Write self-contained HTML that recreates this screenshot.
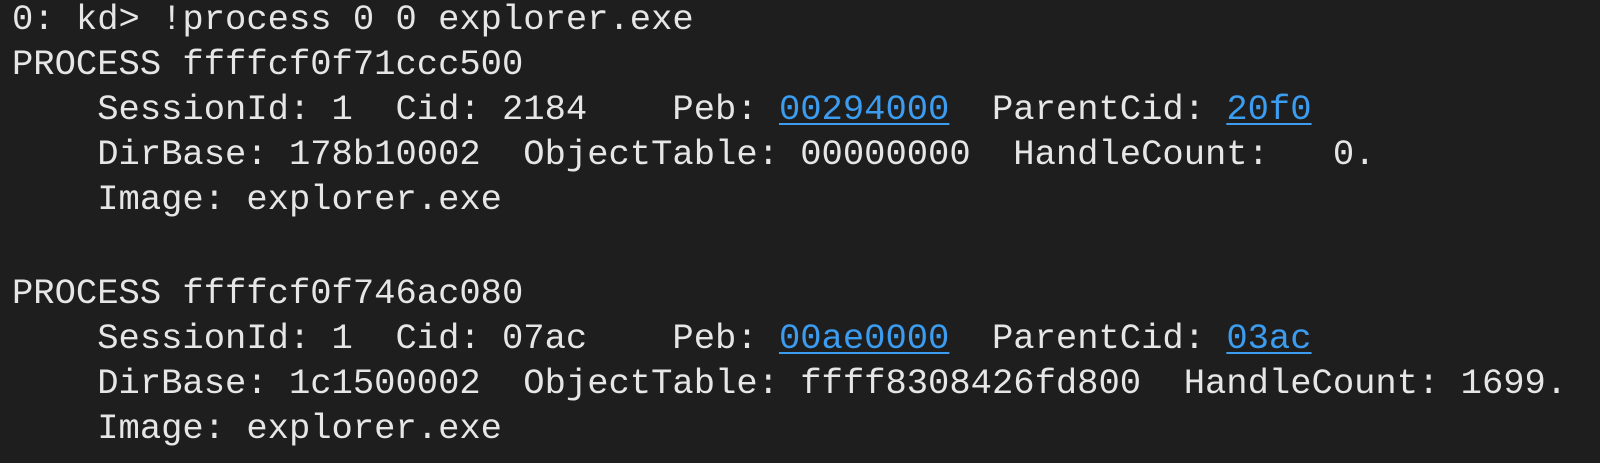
<!DOCTYPE html><html><head><style>
html,body{margin:0;background:#1e1e1e;width:1600px;height:463px;overflow:hidden}
div{position:absolute;left:12px;margin:0;white-space:pre;font-family:"Liberation Mono",monospace;font-size:35.5px;line-height:44px;color:#e6e6e6}
a{color:#3b9cf0;text-decoration:underline;text-underline-offset:4px;text-decoration-thickness:2px}
</style></head><body>
<div style="top:-2px">0: kd&gt; !process 0 0 explorer.exe</div>
<div style="top:43px">PROCESS ffffcf0f71ccc500</div>
<div style="top:88px">    SessionId: 1  Cid: 2184    Peb: <a>00294000</a>  ParentCid: <a>20f0</a></div>
<div style="top:133px">    DirBase: 178b10002  ObjectTable: 00000000  HandleCount:   0.</div>
<div style="top:178px">    Image: explorer.exe</div>
<div style="top:272px">PROCESS ffffcf0f746ac080</div>
<div style="top:317px">    SessionId: 1  Cid: 07ac    Peb: <a>00ae0000</a>  ParentCid: <a>03ac</a></div>
<div style="top:362px">    DirBase: 1c1500002  ObjectTable: ffff8308426fd800  HandleCount: 1699.</div>
<div style="top:407px">    Image: explorer.exe</div>
</body></html>
